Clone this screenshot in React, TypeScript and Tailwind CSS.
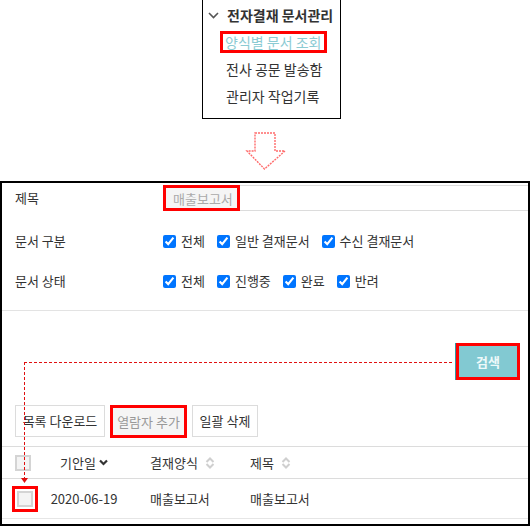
import React from 'react';

const font = { fontFamily: '"Noto Sans CJK KR", "Noto Sans", sans-serif' };

function Check({ label }: { label: string }) {
  return (
    <label className="flex items-center">
      <input type="checkbox" defaultChecked className="w-[13px] h-[13px] m-0" />
      <span className="ml-[5px]">{label}</span>
    </label>
  );
}

function EmptyBox() {
  return <span className="block w-[16px] h-[16px] border-2 border-[#d4d4d4] bg-[#f4f4f4]" />;
}

function SortBoth() {
  return (
    <svg width="10" height="12" viewBox="0 0 10 12" className="ml-[7px]">
      <path d="M1.5 5 L5 1.5 L8.5 5" fill="none" stroke="#cfcfcf" strokeWidth="2" />
      <path d="M1.5 7 L5 10.5 L8.5 7" fill="none" stroke="#cfcfcf" strokeWidth="2" />
    </svg>
  );
}

function SortDown() {
  return (
    <svg width="9" height="7" viewBox="0 0 9 7" className="ml-[3px]">
      <path d="M1 1.5 L4.5 5 L8 1.5" fill="none" stroke="#333" strokeWidth="2.2" />
    </svg>
  );
}

export default function App() {
  return (
    <div className="w-[530px] h-[526px] bg-white text-[#333] overflow-hidden" style={font}>
      {/* menu excerpt */}
      <div className="pl-[202px]">
        <div className="w-[139px] h-[119px] border-x border-b border-black pl-[2px] pt-[2px] text-[14px] leading-[27px]">
          <div className="flex items-center font-bold">
            <svg width="11" height="7" viewBox="0 0 11 7" className="mx-[3px]">
              <path d="M1 1 L5.5 5.5 L10 1" fill="none" stroke="#555" strokeWidth="1.6" />
            </svg>
            <span className="ml-[5px]">전자결재 문서관리</span>
          </div>
          <div className="pl-[15px]">
            <span className="inline-block h-[22px] leading-[16px] border-[3px] border-[#ff0000] pl-[2px] pr-[3px] text-[#8ccbd3]">
              양식별 문서 조회
            </span>
          </div>
          <div className="pl-[21px]">전사 공문 발송함</div>
          <div className="pl-[21px]">관리자 작업기록</div>
        </div>
      </div>

      {/* arrow */}
      <div className="pl-[245px] pt-[12px]">
        <svg width="42" height="40" viewBox="0 0 42 40">
          <path
            d="M10 2 H30 V20 H40 L19.5 38 L2 20 H10 Z"
            fill="none"
            stroke="#ff6b6b"
            strokeWidth="1.4"
            strokeDasharray="2 1"
          />
        </svg>
      </div>

      {/* search panel */}
      <div className="relative mt-[10px] h-[345px] border-2 border-black text-[13px]">
        <div className="flex items-center pl-[13px] pt-[2px]">
          <div className="w-[148px]">제목</div>
          <div className="flex-1 h-[26px] border border-r-0 border-[#dcdcdc] flex">
            <span className="-m-px h-[26px] w-[77px] border-[3px] border-[#ff0000] bg-[#f5f5f5] text-[#aaa] flex items-center pl-[7px] leading-none">
              매출보고서
            </span>
          </div>
        </div>

        <div className="mt-[10px] h-[40px] flex items-center pl-[13px]">
          <div className="w-[148px]">문서 구분</div>
          <div className="flex items-center gap-[12px]">
            <Check label="전체" />
            <Check label="일반 결재문서" />
            <Check label="수신 결재문서" />
          </div>
        </div>
        <div className="h-[40px] flex items-center pl-[13px]">
          <div className="w-[148px]">문서 상태</div>
          <div className="flex items-center gap-[12px]">
            <Check label="전체" />
            <Check label="진행중" />
            <Check label="완료" />
            <Check label="반려" />
          </div>
        </div>

        <div className="mt-[9px] border-t border-[#e3e3e3]" />

        <div className="flex justify-end pt-[32px] pr-[8px]">
          <button className="w-[64px] h-[37px] border-[3px] border-[#ff0000] bg-[#82c9d2] text-[#eef9fa] font-bold shadow-[-1px_0_0_#2f9aa5]">
            검색
          </button>
        </div>

        <div className="flex gap-[5px] pl-[13px] mt-[25px]">
          <button className="w-[90px] h-[32px] border border-[#dcdcdc] bg-white">목록 다운로드</button>
          <button className="w-[77px] h-[33px] border-[3px] border-[#ff0000] bg-[#f5f5f5] text-[#999]">
            열람자 추가
          </button>
          <button className="w-[66px] h-[32px] border border-[#dcdcdc] bg-white">일괄 삭제</button>
        </div>

        <div className="mt-[8px] border-t border-[#dcdcdc]">
          <div className="grid grid-cols-[40px_84px_100px_1fr] h-[32px] items-center border-b border-[#dcdcdc]">
            <div className="pl-[13px]">
              <EmptyBox />
            </div>
            <div className="flex items-center justify-center">
              기안일
              <SortDown />
            </div>
            <div className="flex items-center pl-[24px]">
              결재양식
              <SortBoth />
            </div>
            <div className="flex items-center pl-[24px]">
              제목
              <SortBoth />
            </div>
          </div>
          <div className="grid grid-cols-[40px_84px_100px_1fr] h-[40px] items-center border-b border-[#e6e6e6]">
            <div className="pl-[10px]">
              <div className="w-[26px] h-[26px] border-[3px] border-[#ff0000] flex items-center justify-center">
                <EmptyBox />
              </div>
            </div>
            <div className="text-center">2020-06-19</div>
            <div className="pl-[24px]">매출보고서</div>
            <div className="pl-[24px]">매출보고서</div>
          </div>
        </div>

        {/* annotation: dashed connector */}
        <svg className="absolute left-0 top-0 pointer-events-none" width="526" height="341">
          <path d="M22 179.5 H452" stroke="#e01010" strokeWidth="1" strokeDasharray="3 2" fill="none" />
          <path d="M22.5 179 V296" stroke="#e01010" strokeWidth="1" strokeDasharray="3 2" fill="none" />
          <path d="M19 295 H26 L22.5 300 Z" fill="#e01010" />
        </svg>
      </div>
    </div>
  );
}
